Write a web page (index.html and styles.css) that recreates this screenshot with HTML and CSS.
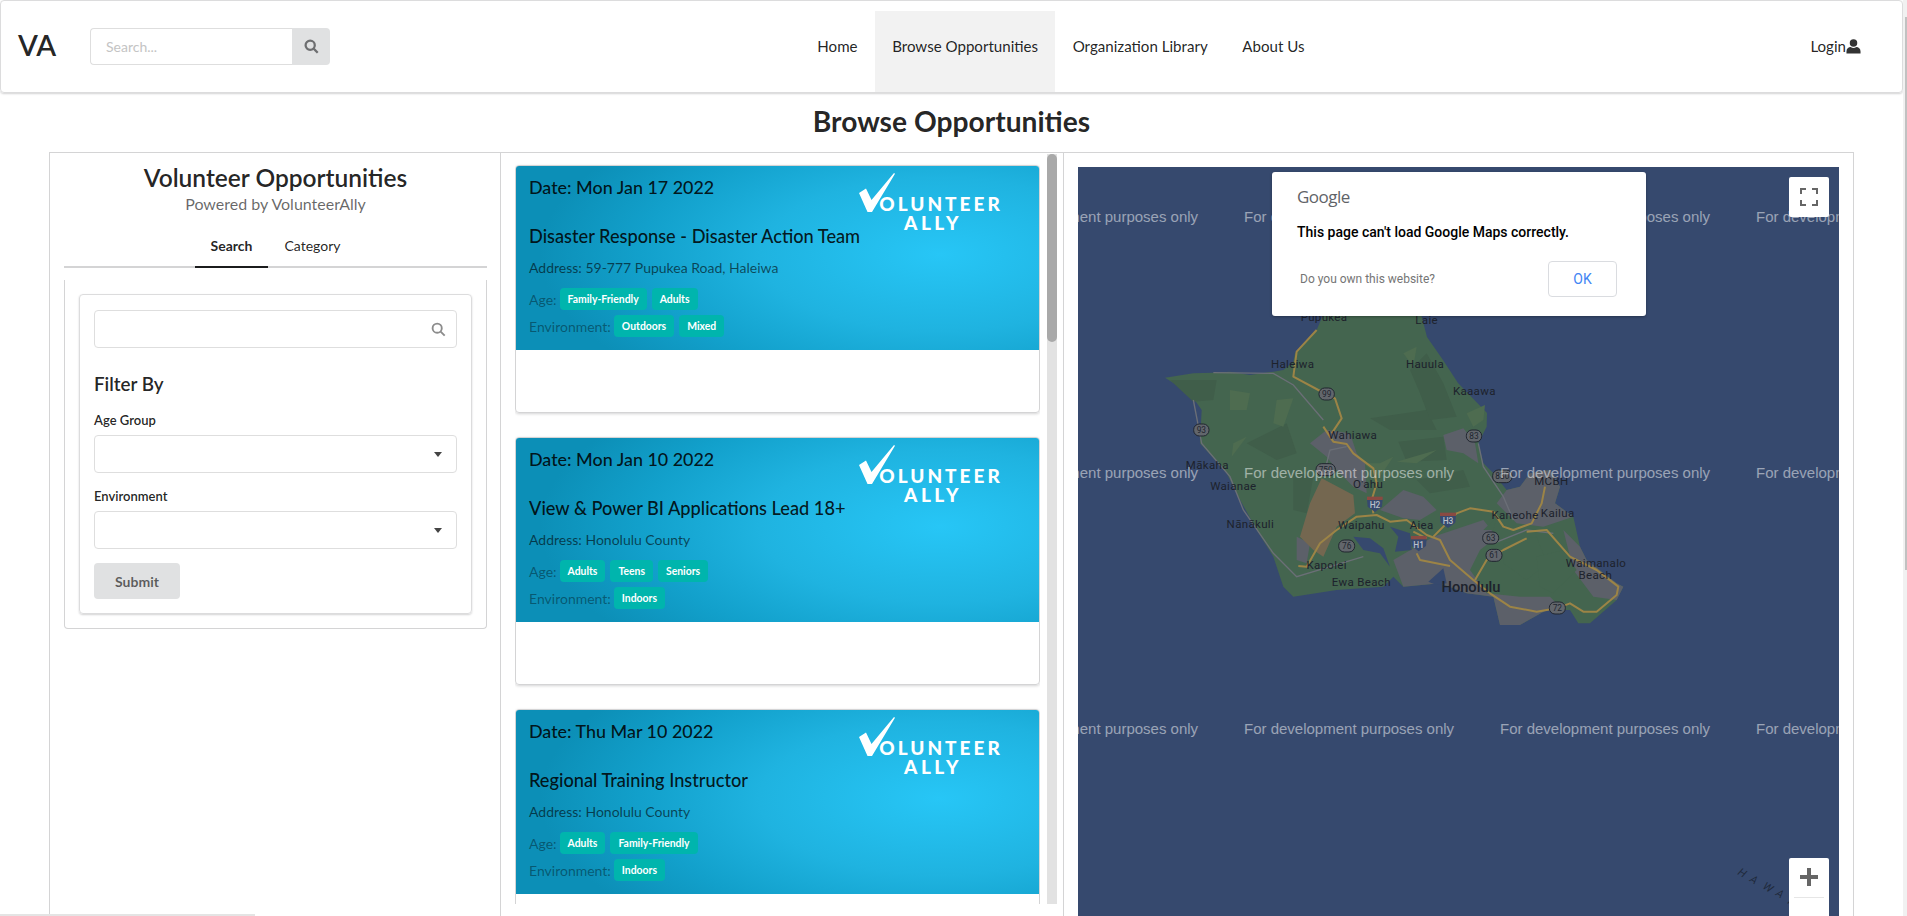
FILE: index.html
```html
<!DOCTYPE html>
<html lang="en">
<head>
    <meta charset="UTF-8">
    <meta name="viewport" content="width=device-width, initial-scale=1.0">
    <title>Browse Opportunities</title>
    <link rel="stylesheet" href="styles.css">
</head>
<body>

<header class="navbar">
    <div class="brand">VA</div>
    <div class="nav-search">
        <input type="text" placeholder="Search...">
        <button type="button" aria-label="Search">
            <svg class="icon-search" viewBox="0 0 16 16"><circle cx="6.6" cy="6.6" r="4.9"/><path d="M10.3 10.3L14.6 14.6"/></svg>
        </button>
    </div>
    <nav class="nav-links">
        <a href="#">Home</a>
        <a href="#" class="active">Browse Opportunities</a>
        <a href="#">Organization Library</a>
        <a href="#">About Us</a>
    </nav>
    <a href="#" class="login">Login<svg viewBox="0 0 16 16"><circle cx="8" cy="4.3" r="4"/><path d="M0.5 15.5V13.2C0.5 10.6 2.6 8.6 5 8.6C6 9.2 7 9.5 8 9.5C9 9.5 10 9.2 11 8.6C13.4 8.6 15.5 10.6 15.5 13.2V15.5Z"/></svg></a>
</header>

<h1 class="page-title">Browse Opportunities</h1>

<main class="columns">
    <section class="col-filter">
        <h2>Volunteer Opportunities</h2>
        <p class="powered">Powered by VolunteerAlly</p>
        <div class="tabs">
            <a href="#" class="active">Search</a>
            <a href="#">Category</a>
        </div>
        <div class="tab-pane">
            <form class="filter-card">
                <div class="field-search">
                    <input type="text">
                    <svg class="icon-search" viewBox="0 0 16 16"><circle cx="6.6" cy="6.6" r="4.9"/><path d="M10.3 10.3L14.6 14.6"/></svg>
                </div>
                <h3>Filter By</h3>
                <label>Age Group</label>
                <div class="dropdown"></div>
                <label>Environment</label>
                <div class="dropdown"></div>
                <button type="button" class="submit">Submit</button>
            </form>
        </div>
    </section>

    <section class="col-list">
        <div class="scroller">
            <article class="card">
                <div class="card-image">
                    <svg class="logo-check" viewBox="0 0 36 39"><path d="M0 20L7 15.500L12.500 27L35 0L36 .8L13 39H8.500Z"/></svg>
                    <div class="logo-text"><span>OLUNTEER</span><span>ALLY</span></div>
                    <div class="card-date">Date: Mon Jan 17 2022</div>
                    <div class="card-title">Disaster Response - Disaster Action Team</div>
                    <div class="card-address">Address: 59-777 Pupukea Road, Haleiwa</div>
                    <div class="chip-row">Age: <span class="chip">Family-Friendly</span><span class="chip">Adults</span></div>
                    <div class="chip-row">Environment: <span class="chip">Outdoors</span><span class="chip">Mixed</span></div>
                </div>
            </article>
            <article class="card">
                <div class="card-image">
                    <svg class="logo-check" viewBox="0 0 36 39"><path d="M0 20L7 15.500L12.500 27L35 0L36 .8L13 39H8.500Z"/></svg>
                    <div class="logo-text"><span>OLUNTEER</span><span>ALLY</span></div>
                    <div class="card-date">Date: Mon Jan 10 2022</div>
                    <div class="card-title">View &amp; Power BI Applications Lead 18+</div>
                    <div class="card-address">Address: Honolulu County</div>
                    <div class="chip-row">Age: <span class="chip">Adults</span><span class="chip">Teens</span><span class="chip">Seniors</span></div>
                    <div class="chip-row">Environment: <span class="chip">Indoors</span></div>
                </div>
            </article>
            <article class="card">
                <div class="card-image">
                    <svg class="logo-check" viewBox="0 0 36 39"><path d="M0 20L7 15.500L12.500 27L35 0L36 .8L13 39H8.500Z"/></svg>
                    <div class="logo-text"><span>OLUNTEER</span><span>ALLY</span></div>
                    <div class="card-date">Date: Thu Mar 10 2022</div>
                    <div class="card-title">Regional Training Instructor</div>
                    <div class="card-address">Address: Honolulu County</div>
                    <div class="chip-row">Age: <span class="chip">Adults</span><span class="chip">Family-Friendly</span></div>
                    <div class="chip-row">Environment: <span class="chip">Indoors</span></div>
                </div>
            </article>
        </div>
        <div class="list-scrollbar"><div class="list-thumb"></div></div>
    </section>

    <section class="col-map">
        <div class="map">
            <svg class="map-canvas" viewBox="1078 167 761 775">
                <g transform="translate(1150 330) scale(.33333)">
                    <!-- land -->
                    <path class="land" d="M45 143L130 130L190 128L240 125L300 135L370 125L400 120L430 95L435 70L470 30L500 0L525 -60L810 -60L831 21L879 90L924 159L1011 249L1010 290L985 340L1000 400L1030 430L1070 480L1110 470L1140 430L1200 420L1230 470L1215 520L1270 560L1290 650L1310 690L1400 760L1420 770L1400 810L1320 880L1285 880L1260 840L1190 840L1110 885L1050 885L1030 800L950 790L870 760L760 770L730 740L700 770L560 780L430 800L400 770L370 680L320 600L265 500L230 430L150 340L155 240L120 190Z"/>
                    <g class="soft">
                        <!-- forest patches -->
                        <path class="forest" d="M60 150L200 150L190 210L130 215Z"/>
                        <path class="forest" d="M290 340L410 280L440 370L380 390Z"/>
                        <path class="forest" d="M430 420L490 440L470 550L430 540Z"/>
                        <path class="forest" d="M660 265L830 240L860 300L720 300Z"/>
                        <path class="forest" d="M745 335L880 320L890 390L770 395Z"/>
                        <path class="forest" d="M780 120L830 70L880 160L920 260L840 270L810 190Z"/>
                        <path class="forest" d="M800 450L940 420L960 470L840 490Z"/>
                        <path class="forest-light" d="M240 180L300 190L290 240L240 240Z"/>
                        <path class="forest-light" d="M380 210L430 205L400 290L370 280Z"/>
                        <path class="forest-light" d="M950 250L1005 225L1000 270L970 290Z"/>
                        <path class="forest-light" d="M640 400L690 400L730 380L690 440Z"/>
                        <path class="forest-light" d="M760 70L800 50L790 110Z"/>
                        <path class="forest-light" d="M250 340L290 320L245 380Z"/>
                        <path class="forest-light" d="M740 395L860 360L800 400Z"/>
                        <!-- towns -->
                        <path class="town" d="M880 315L940 295L975 340L985 400L940 370L890 360Z"/>
                        <path class="town" d="M480 340L530 300L600 310L620 370L645 400L650 490L610 470L560 420L530 380Z"/>
                        <path class="town" d="M690 540L760 480L820 500L860 540L810 570L760 565Z"/>
                        <path class="town" d="M730 690L850 620L1000 570L1040 620L990 660L960 720L1010 790L1110 800L1200 800L1230 830L1190 840L1110 885L1050 885L1030 800L950 790L870 760L760 770Z"/>
                        <path class="town" d="M1040 520L1070 480L1110 470L1140 430L1200 420L1230 470L1215 520L1270 560L1180 590L1100 580Z"/>
                        <path class="town" d="M1240 600L1290 650L1310 690L1400 760L1420 770L1400 810L1330 800L1270 720Z"/>
                        <path class="town" d="M440 620L480 640L470 700L440 690Z"/>
                        <path class="tan" d="M515 445L610 495L615 550L560 590L520 680L490 660L450 620L480 520Z"/>
                        <!-- ridges inside the town areas -->
                        <path class="land" d="M1060 640L1160 620L1190 700L1130 750L1060 700Z"/>
                        <path class="land" d="M1160 680L1240 660L1280 720L1210 790L1170 770Z"/>
                        <path class="land" d="M1000 600L1040 560L1030 600Z"/>
                    </g>
                    <path class="water" d="M610 620L660 625L700 655L720 710L690 670L640 660Z"/>
                    <path class="water" d="M720 590L780 610L785 660L735 665L745 620Z"/>
                    <path class="water" d="M835 755L880 715L890 760L860 765Z"/>
                    <polyline class="minor" points="190,128 370,130 430,165 520,270"/>
                    <polyline class="minor" points="130,210 155,340 240,440 280,540 370,670 440,740 540,710 640,680"/>
                    <polyline class="minor" points="520,440 540,360 590,350"/>
                    <polyline class="minor" points="985,340 1000,410 1060,500 1090,570"/>
                    <polyline class="minor" points="1030,640 1130,600 1210,610"/>
                    <!-- freeways -->
                    <polyline class="road" points="500,0 440,65 430,140 505,180 555,205 575,265 545,310"/>
                    <polyline class="road" points="520,290 550,335 590,342 610,370 670,415 680,460 665,510 670,550"/>
                    <polyline class="road" points="445,708 470,710 510,640 560,600 620,560 680,555 720,575 770,570 830,615 870,630 900,690 970,750 1020,790 1080,830 1160,845 1220,835 1260,820 1300,845 1340,845 1400,795 1405,770 1340,720 1260,680 1190,600 1130,605"/>
                    <polyline class="road" points="850,620 920,550 960,535 1030,545 1060,590 1090,600 1145,580 1175,520 1185,470"/>
                    <polyline class="road" points="975,750 1010,690 1060,660 1130,625"/>
                    <polyline class="road" points="800,670 810,690 900,708"/>
                    <polyline class="road" points="790,605 830,625"/>
                    <!-- shields -->
                    <rect class="shield" x="507" y="174" width="46" height="36" rx="17"/><text class="shield-text" x="530" y="201">99</text>
                    <rect class="shield" x="131" y="282" width="46" height="36" rx="17"/><text class="shield-text" x="154" y="309">93</text>
                    <rect class="shield" x="949" y="300" width="46" height="36" rx="17"/><text class="shield-text" x="972" y="327">83</text>
                    <rect class="shield" x="498" y="401" width="58" height="36" rx="17"/><text class="shield-text" x="527" y="428">750</text>
                    <rect class="shield" x="1028" y="420" width="58" height="38" rx="17"/><text class="shield-text" x="1057" y="448">830</text>
                    <rect class="shield" x="566" y="630" width="48" height="36" rx="17"/><text class="shield-text" x="590" y="657">76</text>
                    <rect class="shield" x="998" y="606" width="48" height="36" rx="17"/><text class="shield-text" x="1022" y="633">63</text>
                    <rect class="shield" x="1008" y="658" width="48" height="36" rx="17"/><text class="shield-text" x="1032" y="685">61</text>
                    <rect class="shield" x="1198" y="816" width="48" height="36" rx="17"/><text class="shield-text" x="1222" y="843">72</text>
                    <path class="interstate" d="M651 508H698L696 530L675 546L653 530Z"/><path class="interstate-top" d="M651 500H698V510H651Z"/><text class="shield-text light" x="675" y="534">H2</text>
                    <path class="interstate" d="M783 626H830L828 648L806 664L785 648Z"/><path class="interstate-top" d="M783 618H830V628H783Z"/><text class="shield-text light" x="806" y="654">H1</text>
                    <path class="interstate" d="M870 556H918L916 578L894 594L872 578Z"/><path class="interstate-top" d="M870 548H918V558H870Z"/><text class="shield-text light" x="894" y="582">H3</text>
                    <!-- places -->
                    <text class="place" x="522" y="-28">Pupukea</text>
                    <text class="place" x="830" y="-18">Laie</text>
                    <text class="place" x="428" y="113">Haleiwa</text>
                    <text class="place" x="825" y="113">Hauula</text>
                    <text class="place" x="973" y="195">Kaaawa</text>
                    <text class="place" x="608" y="327">Wahiawa</text>
                    <text class="place" x="172" y="416">Mākaha</text>
                    <text class="place" x="250" y="479">Waianae</text>
                    <text class="place" x="654" y="473">O'ahu</text>
                    <text class="place" x="301" y="593">Nānākuli</text>
                    <text class="place" x="634" y="596">Waipahu</text>
                    <text class="place" x="815" y="596">Aiea</text>
                    <text class="place" x="1095" y="566">Kaneohe</text>
                    <text class="place" x="1223" y="560">Kailua</text>
                    <text class="place" x="1204" y="465">MCBH</text>
                    <text class="place" x="530" y="717">Kapolei</text>
                    <text class="place" x="634" y="768">Ewa Beach</text>
                    <text class="place" x="1338" y="711">Waimanalo</text>
                    <text class="place" x="1336" y="747">Beach</text>
                    <text class="place big" x="963" y="785">Honolulu</text>
                </g>
                <text class="hawaii" x="1737 1749 1762 1775 1787" y="874 881 888 895 903" rotate="32 32 32 32 32">HAWAI</text>
                <text class="dev" x="988" y="222">For development purposes only</text>
                <text class="dev" x="1244" y="222">For development purposes only</text>
                <text class="dev" x="1500" y="222">For development purposes only</text>
                <text class="dev" x="1756" y="222">For development purposes only</text>
                <text class="dev" x="988" y="478">For development purposes only</text>
                <text class="dev" x="1244" y="478">For development purposes only</text>
                <text class="dev" x="1500" y="478">For development purposes only</text>
                <text class="dev" x="1756" y="478">For development purposes only</text>
                <text class="dev" x="988" y="734">For development purposes only</text>
                <text class="dev" x="1244" y="734">For development purposes only</text>
                <text class="dev" x="1500" y="734">For development purposes only</text>
                <text class="dev" x="1756" y="734">For development purposes only</text>
            </svg>

            <div class="map-dialog">
                <div class="google-word">Google</div>
                <div class="dialog-msg">This page can't load Google Maps correctly.</div>
                <div class="dialog-foot">
                    <a href="#">Do you own this website?</a>
                    <button type="button">OK</button>
                </div>
            </div>

            <button type="button" class="map-btn fullscreen" aria-label="Fullscreen">
                <svg viewBox="0 0 18 18"><path d="M0 6V0H6V2H2V6ZM12 0H18V6H16V2H12ZM0 12H2V16H6V18H0ZM16 12H18V18H12V16H16Z"/></svg>
            </button>
            <div class="map-zoom">
                <svg viewBox="0 0 18 18"><path d="M7 0H11V7H18V11H11V18H7V11H0V7H7Z"/></svg>
                <hr>
            </div>
        </div>
    </section>
</main>

<div class="page-scroll-y"><div class="page-thumb-y"></div></div>
<div class="page-scroll-x"></div>

</body>
</html>
```

FILE: styles.css
```css
* {
    box-sizing: border-box;
}

html, body {
    margin: 0;
    padding: 0;
}

html {
    overflow: hidden;
}

body {
    width: 1907px;
    height: 916px;
    padding-right: 4px;
    font-family: Lato, "Liberation Sans", sans-serif;
    font-size: 14px;
    color: rgba(0, 0, 0, 0.87);
    background-color: white;
    overflow: hidden;
}

a {
    color: inherit;
    text-decoration: none;
}

.navbar {
    display: flex;
    align-items: stretch;
    height: 93px;
    padding-top: 10px;
    border: 1px solid #dcdcdd;
    border-radius: 4px;
    box-shadow: 0 1px 2px 0 rgba(34, 36, 38, 0.2);
}

.brand {
    width: 89px;
    padding: 16px 0 0 17px;
    font-size: 29px;
    font-weight: 600;
    line-height: 36px;
}

.nav-search {
    display: flex;
    width: 240px;
    height: 37px;
    margin-top: 17px;
}

.nav-search input {
    flex: 1;
    min-width: 0;
    padding: 0 15px;
    border: 1px solid #dedede;
    border-right: none;
    border-radius: 4px 0 0 4px;
    font-family: inherit;
    font-size: 14px;
}

.nav-search input::placeholder {
    color: #c4c4c4;
}

.nav-search button {
    width: 38px;
    padding: 0;
    border: none;
    border-radius: 0 4px 4px 0;
    background-color: #e0e1e2;
}

.icon-search {
    display: block;
    width: 15px;
    height: 15px;
    margin: auto;
    fill: none;
    stroke: #6d6e70;
    stroke-width: 2.400;
}

.nav-links {
    display: flex;
    margin-left: 470px;
    font-size: 15.100px;
}

.nav-links a {
    padding: 25px 17.300px 0;
    line-height: 20px;
}

.nav-links a.active {
    background-color: #f2f2f2;
}

.login {
    display: flex;
    align-items: center;
    height: 20px;
    margin: 25px 41px 0 auto;
    font-size: 15.100px;
}

.login svg {
    width: 15px;
    height: 15px;
    fill: #333;
}

.page-title {
    margin: 0;
    padding-top: 10px;
    height: 59px;
    font-size: 28.200px;
    font-weight: 700;
    line-height: 36px;
    text-align: center;
}

.columns {
    display: grid;
    grid-template-columns: 451px 563px 789px;
    width: 1805px;
    height: 800px;
    margin-left: 49px;
    border: 1px solid #d4d4d5;
    border-bottom: none;
    overflow: hidden;
}

.col-filter {
    padding: 0 13px 0 14px;
    border-right: 1px solid #d4d4d5;
}

.col-filter h2 {
    margin: 9px 0 0;
    font-size: 24.500px;
    font-weight: 600;
    line-height: 32px;
    text-align: center;
}

.powered {
    margin: 0;
    color: rgba(0, 0, 0, 0.6);
    font-size: 16px;
    line-height: 20px;
    text-align: center;
}

.tabs {
    display: flex;
    justify-content: center;
    height: 47px;
    margin-top: 7px;
    border-bottom: 2px solid #d4d4d5;
}

.tabs a {
    margin-bottom: -2px;
    padding: 15px 16px 0;
    border-bottom: 2px solid transparent;
    line-height: 20px;
}

.tabs a.active {
    font-weight: 700;
    border-bottom-color: #1b1c1d;
}

.tab-pane {
    margin-top: 12px;
    padding: 14px;
    border: 1px solid #d4d4d5;
    border-top: none;
    border-radius: 0 0 4px 4px;
}

.filter-card {
    display: block;
    height: 320px;
    padding: 15px 14px;
    border: 1px solid #dcdcdd;
    border-radius: 4px;
    box-shadow: 0 1px 2px 0 rgba(34, 36, 38, 0.2);
}

.field-search {
    position: relative;
}

.field-search input {
    display: block;
    width: 100%;
    height: 38px;
    border: 1px solid #dedede;
    border-radius: 4px;
}

.field-search svg {
    position: absolute;
    top: 12px;
    right: 11px;
    stroke: #8c8c8c;
    stroke-width: 2;
}

.filter-card h3 {
    margin: 23px 0 0;
    font-size: 18.800px;
    font-weight: 600;
    line-height: 26px;
}

.filter-card label {
    display: block;
    margin-top: 13px;
    font-size: 13px;
    font-weight: 600;
    line-height: 20px;
}

.dropdown {
    position: relative;
    height: 38px;
    margin-top: 5px;
    border: 1px solid #dedede;
    border-radius: 4px;
}

.dropdown::after {
    content: "";
    position: absolute;
    top: 16px;
    right: 14px;
    border-top: 5px solid #444;
    border-left: 4px solid transparent;
    border-right: 4px solid transparent;
}

.submit {
    display: block;
    width: 86px;
    height: 36px;
    margin-top: 14px;
    padding: 0;
    border: none;
    border-radius: 4px;
    background-color: #e0e1e2;
    color: rgba(0, 0, 0, 0.6);
    font-family: inherit;
    font-size: 14px;
    font-weight: 700;
}

.col-list {
    display: flex;
    align-items: flex-start;
    padding: 1px 0 0 14px;
    border-right: 1px solid #d4d4d5;
}

.scroller {
    flex: none;
    width: 525px;
    height: 750px;
    padding-top: 11px;
    overflow: hidden;
}

.list-scrollbar {
    flex: none;
    width: 10px;
    height: 750px;
    margin-left: 7px;
    background-color: #e2e2e2;
}

.list-thumb {
    height: 188px;
    border-radius: 5px;
    background-color: #a9a9a9;
}

.card {
    height: 248px;
    margin-bottom: 24px;
    border: 1px solid #d4d4d5;
    border-radius: 4px;
    box-shadow: 0 1px 3px 0 #d4d4d5;
    overflow: hidden;
}

.card-image {
    position: relative;
    height: 184px;
    padding: 9px 13px 0;
    background: radial-gradient(ellipse 400px 170px at 81% 48%, #27c6f6 0%, #1fb3e0 45%, #12a0cb 75%, #0c8fb7 100%);
}

.logo-check {
    position: absolute;
    top: 7px;
    left: 343px;
    width: 36px;
    height: 39px;
    fill: white;
}

.logo-text {
    position: absolute;
    top: 28px;
    left: 363px;
    width: 124px;
    color: white;
    font-weight: 900;
    text-align: center;
}

.logo-text span {
    display: block;
    font-size: 19px;
    line-height: 19px;
    letter-spacing: 3px;
}

.logo-text span + span {
    margin-right: 16px;
    letter-spacing: 3.500px;
}

.card-date {
    font-size: 17.900px;
    font-weight: 500;
    line-height: 24px;
}

.card-title {
    margin-top: 25px;
    font-size: 18.200px;
    font-weight: 500;
    line-height: 24px;
}

.card-address {
    margin-top: 11px;
    color: rgba(0, 0, 0, 0.6);
    line-height: 18px;
}

.chip-row {
    display: flex;
    align-items: center;
    gap: 3px;
    margin-top: 5px;
    color: rgba(0, 0, 0, 0.4);
}

.card-address + .chip-row {
    margin-top: 11px;
}

.chip {
    height: 22px;
    margin-right: 2px;
    padding: 0 8px;
    border-radius: 4px;
    background-color: #00b5ad;
    color: white;
    font-size: 10.400px;
    font-weight: 700;
    line-height: 22px;
}

.col-map {
    padding: 14px;
}

.map {
    position: relative;
    height: 775px;
    background-color: #36496e;
    overflow: hidden;
}

.map-canvas {
    display: block;
    width: 761px;
    height: 775px;
}

.soft { filter: blur(2px); }
.land { fill: #44654f; }
.forest { fill: #405e4a; }
.forest-light { fill: #4e6c50; }
.town { fill: #5c6069; }
.tan { fill: #746750; }
.water { fill: #36496e; }

.minor {
    fill: none;
    stroke: #6b6f77;
    stroke-width: 4;
}

.road {
    fill: none;
    stroke: #9c8446;
    stroke-width: 6;
    stroke-linejoin: round;
}

.shield {
    fill: #62666c;
    stroke: #20252f;
    stroke-width: 3;
}

.interstate { fill: #36496e; }
.interstate-top { fill: #8a4a42; }

.shield-text {
    fill: #20252f;
    font-family: Roboto, sans-serif;
    font-size: 25px;
    text-anchor: middle;
}

.shield-text.light {
    fill: #b9bfc9;
    font-weight: 500;
}

.place {
    fill: #1d222c;
    font-family: Roboto, sans-serif;
    font-size: 34.500px;
    letter-spacing: 1px;
    text-anchor: middle;
}

.place.big {
    font-size: 44px;
    font-weight: 500;
    letter-spacing: 0;
}

.hawaii {
    fill: #20293c;
    font-family: Roboto, sans-serif;
    font-size: 11px;
    font-style: italic;
}

.dev {
    fill: rgba(255, 255, 255, 0.5);
    font-family: "Liberation Sans", Arial, sans-serif;
    font-size: 15px;
}

.map-dialog {
    position: absolute;
    top: 5px;
    left: 194px;
    width: 374px;
    height: 144px;
    padding: 13px 25px 0;
    border-radius: 3px;
    background-color: white;
    box-shadow: 0 1px 3px rgba(0, 0, 0, 0.3);
    font-family: Roboto, sans-serif;
}

.google-word {
    color: #5f6368;
    font-family: "Open Sans", sans-serif;
    font-size: 17px;
    letter-spacing: -0.500px;
    line-height: 24px;
}

.dialog-msg {
    margin-top: 13px;
    color: black;
    font-size: 14px;
    font-weight: 500;
    line-height: 20px;
}

.dialog-foot {
    display: flex;
    align-items: center;
    justify-content: space-between;
    margin: 19px 4px 0 3px;
}

.dialog-foot a {
    color: #757575;
    font-size: 12px;
}

.dialog-foot button {
    width: 69px;
    height: 36px;
    border: 1px solid #dadce0;
    border-radius: 4px;
    background-color: white;
    color: #4285f4;
    font-family: inherit;
    font-size: 14px;
}

.map-btn, .map-zoom {
    position: absolute;
    width: 40px;
    border: none;
    padding: 0;
    border-radius: 2px;
    background-color: white;
}

.fullscreen {
    top: 10px;
    right: 10px;
    height: 40px;
}

.fullscreen svg {
    display: block;
    width: 18px;
    height: 18px;
    margin: auto;
    fill: #666;
}

.map-zoom {
    top: 691px;
    right: 10px;
    height: 84px;
}

.map-zoom svg {
    display: block;
    width: 18px;
    height: 18px;
    margin: 10px auto 0;
    fill: #666;
}

.map-zoom hr {
    margin: 11px 5px 0;
    border: none;
    border-top: 1px solid #e6e6e6;
}

.page-scroll-y {
    position: fixed;
    top: 0;
    right: 0;
    bottom: 0;
    width: 4px;
    padding-top: 17px;
    background-color: #f1f1f1;
}

.page-thumb-y {
    width: 2px;
    height: 553px;
    margin-left: 2px;
    background-color: #c1c1c1;
}

.page-scroll-x {
    position: fixed;
    left: 0;
    bottom: 0;
    width: 255px;
    height: 2px;
    background-color: #e4e4e4;
}
```
